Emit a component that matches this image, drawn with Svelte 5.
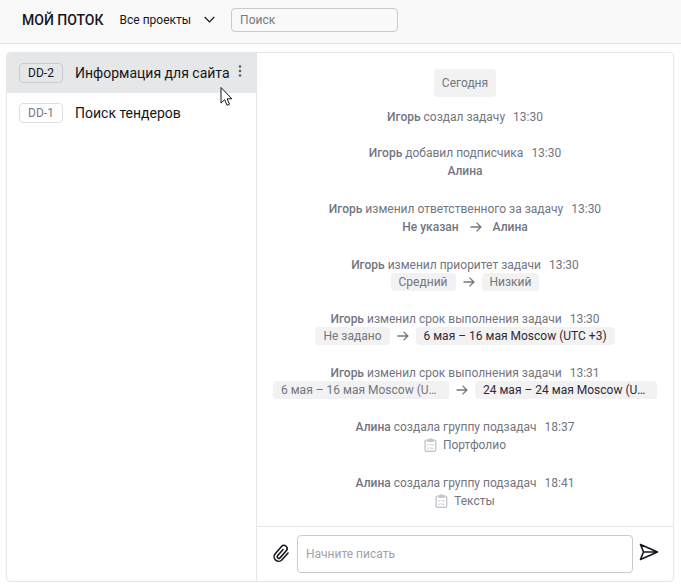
<script>
  let search = '';
  let message = '';
  let activeId = 'DD-2';

  const tasks = [
    { id: 'DD-2', title: 'Информация для сайта' },
    { id: 'DD-1', title: 'Поиск тендеров' },
  ];

  const events = [
    { author: 'Игорь', action: 'создал задачу', time: '13:30' },
    { author: 'Игорь', action: 'добавил подписчика', time: '13:30', kind: 'people', to: 'Алина' },
    { author: 'Игорь', action: 'изменил ответственного за задачу', time: '13:30', kind: 'people', from: 'Не указан', to: 'Алина' },
    { author: 'Игорь', action: 'изменил приоритет задачи', time: '13:30', kind: 'chips', from: 'Средний', to: 'Низкий' },
    { author: 'Игорь', action: 'изменил срок выполнения задачи', time: '13:30', kind: 'chips', from: 'Не задано', to: '6 мая – 16 мая Moscow (UTC +3)', dark: true },
    { author: 'Игорь', action: 'изменил срок выполнения задачи', time: '13:31', kind: 'chips', from: '6 мая – 16 мая Moscow (U…', to: '24 мая – 24 мая Moscow (U…', dark: true, narrow: true },
    { author: 'Алина', action: 'создала группу подзадач', time: '18:37', kind: 'group', to: 'Портфолио' },
    { author: 'Алина', action: 'создала группу подзадач', time: '18:41', kind: 'group', to: 'Тексты' },
  ];
</script>

<style>
  :global(body) {
    background: #fff;
  }

  .app {
    display: flex;
    flex-direction: column;
    height: 587px;
    overflow: hidden;
    box-sizing: border-box;
    font-family: Roboto, "Noto Sans", sans-serif;
    color: #16161d;
    position: relative;
  }

  .app * {
    box-sizing: border-box;
  }

  button {
    padding: 0;
    border: 0;
    background: none;
    font: inherit;
    color: inherit;
    text-align: left;
  }

  svg {
    display: block;
    flex: none;
    fill: none;
    stroke: currentColor;
  }

  header {
    display: flex;
    align-items: center;
    height: 44px;
    flex: none;
    padding: 0 0 4px 22px;
    background: #f9f9f9;
    border-bottom: 1px solid #e5e6e8;
  }

  h1 {
    margin: 0 16px 0 0;
    font-size: 14px;
    font-weight: 500;
    line-height: 18px;
    white-space: nowrap;
  }

  .filter {
    display: flex;
    align-items: center;
    gap: 13px;
    margin-right: 16px;
    font-size: 12px;
    white-space: nowrap;
  }

  input {
    font-family: inherit;
    font-size: 12px;
    color: #16161d;
    background: transparent;
    border: 1px solid #c9cacd;
    border-radius: 4px;
    padding: 0 8px;
    outline: none;
  }

  .search {
    width: 167px;
    height: 24px;
  }

  .search::placeholder {
    color: #777a80;
  }

  .board {
    display: flex;
    flex: none;
    height: 530px;
    margin: 8px 7px 0 6px;
    border: 1px solid #e5e6e8;
    border-radius: 4px;
    overflow: hidden;
  }

  .tasks {
    width: 250px;
    flex: none;
    border-right: 1px solid #e5e6e8;
  }

  .task {
    display: flex;
    align-items: center;
    width: 250px;
    height: 40px;
    padding-left: 12px;
    font-size: 14px;
    line-height: 18px;
    white-space: nowrap;
  }

  .title {
    margin-top: -1px;
  }

  .task.active {
    background: #e5e7e8;
  }

  .code {
    width: 44px;
    height: 20px;
    margin-right: 12px;
    border: 1px solid #dedfe1;
    border-radius: 4px;
    font-size: 12px;
    line-height: 18px;
    text-align: center;
    color: #777a80;
  }

  .active .code {
    border-color: #c9cbce;
    color: #16161d;
  }

  .dots {
    margin: -4px 0 0 8px;
    fill: #5d6068;
    stroke: none;
  }

  .chat {
    display: flex;
    flex-direction: column;
    flex: 1;
    min-width: 0;
  }

  .feed {
    flex: 1;
    min-height: 0;
    display: flex;
    flex-direction: column;
    align-items: center;
    padding-top: 16px;
    color: #73757f;
    font-size: 12px;
    line-height: 18px;
    white-space: nowrap;
  }

  .day {
    height: 28px;
    flex: none;
    margin-bottom: 11px;
    padding: 0 8px;
    border-radius: 4px;
    background: #f2f2f2;
    line-height: 28px;
  }

  .event {
    display: flex;
    flex: none;
    flex-direction: column;
    align-items: center;
    margin-bottom: 18px;
  }

  b {
    font-weight: 500;
  }

  .time {
    margin-left: 5px;
  }

  .detail {
    display: flex;
    align-items: center;
    height: 18px;
    margin-bottom: 2px;
  }

  .people {
    gap: 11px;
    font-weight: 500;
  }

  .chips {
    gap: 7px;
    margin: -1px 0 1px;
  }

  .group {
    gap: 6px;
  }

  .chip {
    padding: 0 8px;
    border-radius: 4px;
    background: #f2f2f2;
  }

  .narrow .chip {
    width: 176px;
  }

  .narrow .chip.dark {
    width: 182px;
  }

  .dark {
    color: #2b2b3a;
  }

  .clipboard {
    color: #c6c7cb;
  }

  .compose {
    display: flex;
    align-items: center;
    height: 55px;
    flex: none;
    padding: 0 14px 0 15px;
    border-top: 1px solid #e5e6e8;
  }

  .message {
    flex: 1;
    min-width: 0;
    height: 38px;
    margin: 0 6px 0 7px;
  }

  .message::placeholder {
    color: #a0a2a8;
  }

  .send {
    margin-top: -4px;
  }

  .clip {
    margin-top: -3px;
  }

  .cursor {
    position: absolute;
    left: 220px;
    top: 86px;
    fill: #fff;
    stroke: #16161d;
  }
</style>

<div class="app">
  <header>
    <h1>МОЙ ПОТОК</h1>
    <button class="filter">
      Все проекты
      <svg width="11" height="7" viewBox="0 0 11 7" stroke-width="1.2"><path d="M.7 1l4.8 4.8L10.3 1" /></svg>
    </button>
    <input class="search" placeholder="Поиск" bind:value={search} />
  </header>

  <div class="board">
    <div class="tasks">
      {#each tasks as task}
        <button class="task" class:active={task.id == activeId} on:click={() => (activeId = task.id)}>
          <span class="code">{task.id}</span>
          <span class="title">{task.title}</span>
          {#if task.id == activeId}
            <svg class="dots" width="4" height="14" viewBox="0 0 4 14">
              <circle cx="2" cy="2.5" r="1.3" />
              <circle cx="2" cy="7" r="1.3" />
              <circle cx="2" cy="11.5" r="1.3" />
            </svg>
          {/if}
        </button>
      {/each}
    </div>

    <div class="chat">
      <div class="feed">
        <div class="day">Сегодня</div>
        {#each events as event}
          <div class="event">
            <div><b>{event.author}</b> {event.action} <span class="time">{event.time}</span></div>
            {#if event.kind}
              <div
                class="detail"
                class:people={event.kind == 'people'}
                class:chips={event.kind == 'chips'}
                class:group={event.kind == 'group'}
                class:narrow={event.narrow}>
                {#if event.kind == 'group'}
                  <svg class="clipboard" width="13" height="14" viewBox="0 0 13 14" stroke-width="1.4">
                    <rect x="1.1" y="2.1" width="10.6" height="11.2" rx="1" />
                    <path d="M4 3.2V1.9h1.2a1.3 1.3 0 0 1 2.5 0H9v1.3z" fill="currentColor" />
                    <path d="M3.2 6.5l.9.8 1.3-1.4M6.6 6.8h3M3.2 9.9l.9.8 1.3-1.4M6.6 10.2h3" stroke-width="1" />
                  </svg>
                {/if}
                {#if event.from}
                  <span class:chip={event.kind == 'chips'}>{event.from}</span>
                  <svg width="12" height="12" viewBox="0 0 12 12" stroke-width="1.3"><path d="M.5 6h10.3M6.5 1.6L10.9 6l-4.4 4.4" /></svg>
                {/if}
                <span class:chip={event.kind == 'chips'} class:dark={event.dark}>{event.to}</span>
              </div>
            {/if}
          </div>
        {/each}
      </div>

      <div class="compose">
        <button class="clip" aria-label="Прикрепить">
          <svg width="18" height="20" viewBox="0 0 24 26" stroke-width="2.1" stroke-linecap="round">
            <path d="M21.4 13l-8 8.9a6 6 0 0 1-9.1-8l8.6-9.8a4.3 4.3 0 0 1 6.4 5.7l-8.6 9.7a2.2 2.2 0 0 1-3.3-2.9l7.4-8.3" />
          </svg>
        </button>
        <input class="message" placeholder="Начните писать" bind:value={message} />
        <button class="send" aria-label="Отправить">
          <svg width="20" height="18" viewBox="0 0 20 18" stroke-width="1.6" stroke-linejoin="round">
            <path d="M1.5 1.5L18.5 9l-17 7.5L4.5 9zM4.5 9h14" />
          </svg>
        </button>
      </div>
    </div>
  </div>

  <svg class="cursor" width="13" height="21" viewBox="0 0 13 21"><path d="M1 1.5v15.6l3.6-3.4 2.5 5.6 2.4-1.1-2.4-5.4h4.8z" /></svg>
</div>
